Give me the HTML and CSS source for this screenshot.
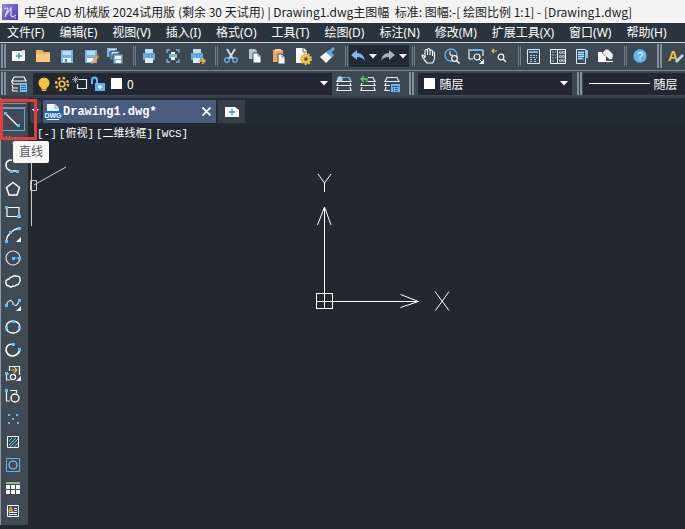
FILE: index.html
```html
<!DOCTYPE html>
<html lang="zh-CN">
<head>
<meta charset="utf-8">
<title>中望CAD 机械版 2024</title>
<link rel="stylesheet" href="styles.css">
</head>
<body>
<header class="titlebar">
  <svg class="logo" width="16" height="16" viewBox="0 0 16 16"><defs><linearGradient id="lg" x1="0" y1="0" x2="1" y2="1"><stop offset="0" stop-color="#8d86dc"/><stop offset="1" stop-color="#5433b4"/></linearGradient></defs><rect width="16" height="16" fill="url(#lg)"/><path d="M2 5q4-2 4 0-2 5-3 8M4 11l5-7v8l2 1 3-2" fill="none" stroke="#e5dcf8" stroke-width="1.2"/><path d="M13 14h1" stroke="#fff"/></svg>
  <h1>中望CAD 机械版 2024试用版 (剩余 30 天试用) | Drawing1.dwg主图幅&nbsp; 标准: 图幅:-[ 绘图比例 1:1] - [Drawing1.dwg]</h1>
</header>
<nav class="menu">
  <a href="#">文件(F)</a><a href="#">编辑(E)</a><a href="#">视图(V)</a><a href="#">插入(I)</a><a href="#">格式(O)</a><a href="#">工具(T)</a><a href="#">绘图(D)</a><a href="#">标注(N)</a><a href="#">修改(M)</a><a href="#">扩展工具(X)</a><a href="#">窗口(W)</a><a href="#">帮助(H)</a>
</nav>
<div class="toolbar standard">
  <span class="grip"></span>
  <button aria-label="新建"><svg viewBox="0 0 18 18"><path d="M2 4h10l3 3v7H2z" fill="#fff"/><path d="M12 3h3v4h-3z" fill="#dbe5ec"/><path d="M9 6v6M6 9h6" stroke="#3b91c5" stroke-width="1.4"/></svg></button>
  <button aria-label="打开"><svg viewBox="0 0 18 18"><path d="M2 3h6l2 2h6v10H2z" fill="#e9b56e"/><path d="M2 7h14v8H2z" fill="#ffc77d"/></svg></button>
  <button aria-label="保存"><svg viewBox="0 0 18 18"><path d="M3 3h12v13H3z" fill="#75b4ed"/><path d="M5 4h8v4H5z" fill="#b8dcf7"/><path d="M5 11h8v4H5z" fill="#fff"/><path d="M7 12h2v3H7z" fill="#4480b4"/></svg></button>
  <button aria-label="另存为"><svg viewBox="0 0 18 18"><path d="M3 3h12v13H3z" fill="#75b4ed"/><path d="M5 4h8v4H5z" fill="#b8dcf7"/><path d="M5 11h6v4H5z" fill="#fff"/><path d="M15 8l2 2-5 6-3 1 1-3z" fill="#eea447"/><path d="M15 8l2 2" stroke="#d4572b" stroke-width="2"/></svg></button>
  <button aria-label="全部保存"><svg viewBox="0 0 18 18"><path d="M1 1h10v9H1z" fill="#75b4ed"/><path d="M3 2h6v3H3z" fill="#d1e9fb"/><path d="M4 4h10v9H4z" fill="#5798cd" stroke="#394753"/><path d="M6 5h6v3H6z" fill="#d1e9fb"/><path d="M7 7h10v10H7z" fill="#75b4ed" stroke="#394753"/><path d="M9 9h6v3H9zM10 13h5v3h-5z" fill="#fff"/></svg></button>
  <span class="sep"></span>
  <button aria-label="打印"><svg viewBox="0 0 18 18"><path d="M5 2h8v4H5z" fill="#c5e1f5"/><path d="M3 6h12v7H3z" fill="#67a9e1"/><path d="M5 11h8v5H5z" fill="#dceefa"/></svg></button>
  <button aria-label="打印预览"><svg viewBox="0 0 18 18"><path d="M3 6V3h3M12 3h3v3M15 12v3h-3M6 15H3v-3" fill="none" stroke="#73b5e7" stroke-width="1.3"/><path d="M7 5h4v2H7z" fill="#fff"/><path d="M5 7h8v4H5z" fill="#7bbbeb"/><path d="M7 10h4v3H7z" fill="#e8f4fd"/></svg></button>
  <button aria-label="发布"><svg viewBox="0 0 18 18"><path d="M5 2h8v4H5z" fill="#c5e1f5"/><path d="M3 6h12v7H3z" fill="#67a9e1"/><path d="M5 11h7v5H5z" fill="#dceefa"/><path d="M10 14h6M14 11l3 3-3 3" fill="none" stroke="#f1bd47" stroke-width="1.4"/></svg></button>
  <span class="sep"></span>
  <button aria-label="剪切"><svg viewBox="0 0 18 18"><path d="M5 2l6 10M13 2L7 12" stroke="#ccd9e3" stroke-width="2"/><circle cx="5" cy="13" r="2.2" fill="none" stroke="#6aaddf" stroke-width="1.4"/><circle cx="13" cy="13" r="2.2" fill="none" stroke="#6aaddf" stroke-width="1.4"/></svg></button>
  <button aria-label="复制"><svg viewBox="0 0 18 18"><path d="M3 2h6l2 2v8H3z" fill="#b3c6d3"/><path d="M7 6h5l3 3v7H7z" fill="#fff" stroke="#3e4a55"/><path d="M12 6v3h3" fill="none" stroke="#6a7b88"/></svg></button>
  <button aria-label="粘贴"><svg viewBox="0 0 18 18"><path d="M3 3h10v12H3z" fill="#eda864"/><path d="M5 2h6v2H5z" fill="#f4d2a5"/><path d="M8 7h4l3 3v7H8z" fill="#fff" stroke="#3e4a55"/><path d="M12 7v3h3" fill="none" stroke="#6a7b88"/></svg></button>
  <button aria-label="页面设置"><svg viewBox="0 0 18 18"><path d="M2 1h8l3 3v12H2z" fill="#fff"/><path d="M9 1v4h4" fill="none" stroke="#56636e"/><circle cx="12" cy="12" r="5" fill="#c99a2c" stroke="#e9bd50" stroke-width="2" stroke-dasharray="2 1.5"/><circle cx="12" cy="12" r="3.2" fill="none" stroke="#f2c34e" stroke-width="2"/><circle cx="12" cy="12" r="1.5" fill="#4a4c45"/></svg></button>
  <button aria-label="特性匹配"><svg viewBox="0 0 18 18"><path d="M8 5l6 5-6 6-6-6z" fill="#fff"/><path d="M8 5l3-2 5 5-2 3z" fill="#5fa9e2"/><path d="M12 5l4-4" stroke="#5fa9e2" stroke-width="3"/></svg></button>
  <span class="sep"></span>
  <div class="history">
    <button aria-label="放弃"><svg viewBox="0 0 18 18"><path d="M2 8l6-5v3c5 0 7 3 8 8-2-3-4-4-8-4v3z" fill="#7eb9ee"/></svg></button>
    <button class="drop" aria-label="放弃列表"><svg viewBox="0 0 8 5"><path d="M0 0h8L4 4.500z" fill="#fff"/></svg></button>
    <button aria-label="重做"><svg viewBox="0 0 18 18"><path d="M16 8l-6-5v3c-5 0-7 3-8 8 2-3 4-4 8-4v3z" fill="#aab1b7"/></svg></button>
    <button class="drop" aria-label="重做列表"><svg viewBox="0 0 8 5"><path d="M0 0h8L4 4.500z" fill="#fff"/></svg></button>
  </div>
  <span class="sep tight"></span>
  <button aria-label="平移"><svg viewBox="0 0 18 18"><path d="M6 11V4q0-1.500 1.300-1.500T8.500 4V3q0-1.500 1.200-1.500T11 3v1q.2-1 1.200-1t1.300 1v2q.2-1 1-1t1 1v5c0 3-1 4-2 5H8c-2-2-4-5-5-7 0-2 2-1 3 2M8.500 4v4M11 4v4M13.500 6v3" fill="none" stroke="#fff" stroke-width="1.100"/></svg></button>
  <button aria-label="实时缩放"><svg viewBox="0 0 18 18"><circle cx="8" cy="8" r="6" fill="none" stroke="#63abe0" stroke-width="1.500"/><path d="M7 4v4h3" fill="none" stroke="#fff"/><circle cx="11.500" cy="11.500" r="2.800" fill="#3d4953" stroke="#fff" stroke-width="1.200"/><path d="M13.500 13.500l3 3" stroke="#fff" stroke-width="1.500"/></svg></button>
  <button aria-label="窗口缩放"><svg viewBox="0 0 18 18"><path d="M2 12V3h14v6M2 12h4" fill="none" stroke="#fff" stroke-width="1.100"/><path d="M1 2h15v2H1z" fill="#6bb4e8"/><circle cx="10" cy="10" r="3" fill="#3d4953" stroke="#fff" stroke-width="1.200"/><path d="M12 12l3 3" stroke="#fff"/><path d="M17 12v5h-5z" fill="#fff"/></svg></button>
  <button aria-label="缩放上一个"><svg viewBox="0 0 18 18"><path d="M1 4h5M3 2L1 4l2 2" fill="none" stroke="#e9bd45" stroke-width="1.200"/><circle cx="10" cy="10" r="2.800" fill="none" stroke="#fff" stroke-width="1.200"/><path d="M12 12l3 3" stroke="#fff" stroke-width="1.200"/></svg></button>
  <span class="sep"></span>
  <button aria-label="特性"><svg viewBox="0 0 18 18"><path d="M2.500 2.500h12v14h-12z" fill="none" stroke="#dce9f3"/><path d="M4 4h9v2H4z" fill="#6db5e9"/><path d="M5 8.500h7M5 10.500h7M5 12.500h3M5 14.500h3M9 12.500h3M9 14.500h3" stroke="#9ccff1" stroke-dasharray="2 1"/></svg></button>
  <button aria-label="设计中心"><svg viewBox="0 0 18 18"><path d="M1.500 2.500h15v14h-15zM8.500 2v14" fill="none" stroke="#fff"/><path d="M3 5h2M3 8h2M3 11h2M3 14h2M6 5h1M6 8h1M6 11h1" stroke="#83c2ef"/><path d="M10.500 4.500h2v2h-2zM13.500 4.500h2v2h-2zM10.500 8.500h2v2h-2zM13.500 8.500h2v2h-2zM10.500 12.500h2v2h-2zM13.500 12.500h2v2h-2z" fill="#61717c" stroke="#d9eaf6" stroke-width=".6"/></svg></button>
  <button aria-label="工具选项板"><svg viewBox="0 0 18 18"><path d="M3.500 2.500h9v14h-9z" fill="none" stroke="#dbe6ee"/><path d="M5 4h6v9H5z" fill="#4a91cc"/><path d="M5 5.500h6M5 7.500h6M5 9.500h6M5 11.500h4" stroke="#b9ddf5"/><path d="M12 3h3v8h-3z" fill="#8fc8ee"/></svg></button>
  <button aria-label="删除"><svg viewBox="0 0 18 18"><path d="M1 5h8v10H1z" fill="#fff"/><path d="M5 6l3-3q2-2 4 0l4 4v4l-3 2z" fill="#eef3f6" stroke="#4a5661" stroke-width=".7"/><path d="M1 14.500h15" stroke="#fff" stroke-width="1.200"/></svg></button>
  <span class="sep"></span>
  <button aria-label="帮助"><svg class="badge" viewBox="0 0 18 18"><circle cx="9" cy="9" r="6.700" fill="#62b6f5"/><text x="9" y="13" text-anchor="middle" font-size="11" fill="#fff">?</text></svg></button>
  <span class="grip wide"></span>
  <button aria-label="文字样式"><svg class="badge" viewBox="0 0 18 18"><text x="1" y="14" font-size="14" font-weight="700" fill="#f1c23f">A</text><path d="M9 15l7-7" stroke="#c9d6df" stroke-width="2.500"/></svg></button>
</div>
<div class="toolbar properties">
  <span class="grip"></span>
  <button class="layers" aria-label="图层特性管理器"><svg viewBox="0 0 18 18"><path d="M4 2h10l2 4H2zM2 6v1l1 2h7M2 10l1 3h5M2 14l1 2h5" fill="none" stroke="#fff" stroke-width="1.200"/><path d="M10 8h7v9h-7z" fill="#7abdf0"/><path d="M11 10.500h5M11 12.500h5M11 14.500h5" stroke="#2c6ba3"/></svg></button>
  <div class="combo layer">
    <svg viewBox="0 0 18 18"><circle cx="9" cy="8" r="5.500" fill="#f8c33c"/><path d="M6 12h6l-1 4H7z" fill="#f8c33c"/><path d="M7 14.500h4" stroke="#a8812d"/></svg>
    <svg viewBox="0 0 18 18"><circle cx="9" cy="9" r="2.800" fill="none" stroke="#f8c33c" stroke-width="1.600"/><circle cx="9" cy="9" r="6" fill="none" stroke="#f8c33c" stroke-width="2.400" stroke-dasharray="2.400 2.310"/></svg>
    <svg viewBox="0 0 18 18"><path d="M8 4.500h7.500v9h-9V9" fill="none" stroke="#e4eaf0" stroke-width="1.200"/><path d="M4.500 1v7M1 4.500h7M2 2l5 5M7 2L2 7" stroke="#aab4bd" stroke-width=".8"/></svg>
    <svg viewBox="0 0 18 18"><path d="M3 9V5q0-2.500 2.500-2.500T8 5v3" fill="none" stroke="#69b7ed" stroke-width="2"/><path d="M6 8h10v8H6z" fill="#5eb4f4"/><path d="M11 10v4M9 12h4" stroke="#fff" stroke-width="1.500"/></svg>
    <span class="swatch"></span>
    <select aria-label="图层"><option>0</option></select>
    <svg class="arrow" viewBox="0 0 8 5"><path d="M0 0h8L4 4.500z" fill="#fff"/></svg>
  </div>
  <button aria-label="设为当前图层"><svg viewBox="0 0 18 18"><path d="M4 2.500h10l2 4H2zM3 8l-1 2.500h14L15 8M3 12l-1 3.500h14L15 12" fill="none" stroke="#e8eef2" stroke-width="1.200"/><path d="M4 2.500h10l2 4" fill="none" stroke="#6aa9d6" stroke-width="1.200"/><circle cx="5" cy="4" r="2.700" fill="#a6d2ee"/></svg></button>
  <button aria-label="上一个图层"><svg viewBox="0 0 18 18"><path d="M9 2.500h5l2 4H9M3 8l-1 2.500h14L15 8M3 12l-1 3.500h14L15 12" fill="none" stroke="#e8eef2" stroke-width="1.200"/><path d="M8 7V4H2M5 1L2 4l3 3" fill="none" stroke="#67c96e" stroke-width="1.300"/></svg></button>
  <button aria-label="图层状态"><svg viewBox="0 0 18 18"><path d="M4 2.500h10l2 4H2zM3 8l-1 2.500h5M3 12l-1 3.500h5" fill="none" stroke="#e8eef2" stroke-width="1.200"/><path d="M8 9h9v8H8z" fill="#67b6f0"/><path d="M9 11.500h7M10 13.500h1M12 13.500h3M10 15.500h1M12 15.500h3" stroke="#245f91"/></svg></button>
  <span class="grip mid"></span>
  <div class="combo color"><span class="swatch"></span><select aria-label="颜色"><option>随层</option></select><svg class="arrow" viewBox="0 0 8 5"><path d="M0 0h8L4 4.500z" fill="#fff"/></svg></div>
  <span class="grip mid second"></span>
  <div class="combo linetype"><span class="rule"></span><select aria-label="线型"><option>随层</option></select></div>
</div>
<main>
  <aside class="draw">
    <button class="active" aria-label="直线" aria-describedby="tip"><svg viewBox="0 0 18 18"><path d="M2 3l12 12" stroke="#fff" stroke-width="1.200"/><path d="M0 1h3v3H0zM13 13h3v3h-3z" fill="#61bff3"/></svg></button>
    <button aria-label="构造线"><svg viewBox="0 0 18 18"><path d="M2 2l2 2 2-2M8 9h3" fill="none" stroke="#61a9d6"/></svg></button>
    <button aria-label="多段线"><svg viewBox="0 0 18 18"><path d="M14 14H8Q2 13 2 8t6-5" fill="none" stroke="#fff" stroke-width="1.500"/><path d="M12 13h3v3h-3zM6 13h3v3H6z" fill="#61bff3"/></svg></button>
    <button aria-label="正多边形"><svg viewBox="0 0 18 18"><path d="M9 2.500l6.500 5-2.500 7.500H5L2.500 7.500z" fill="none" stroke="#fff" stroke-width="1.500"/></svg></button>
    <button aria-label="矩形"><svg viewBox="0 0 18 18"><path d="M3 4.500h12v9H3z" fill="none" stroke="#fff" stroke-width="1.200"/><path d="M1 3h3v3H1zM13 12h4v3h-4z" fill="#61bff3"/></svg></button>
    <button aria-label="圆弧"><svg viewBox="0 0 18 18"><path d="M2 15Q4 5 15 2" fill="none" stroke="#fff" stroke-width="1.300"/><path d="M14 1h3v3h-3zM5 5h3v3H5zM1 14h3v3H1z" fill="#61bff3"/><path d="M17 11v5h-5z" fill="#fff"/></svg></button>
    <button aria-label="圆"><svg viewBox="0 0 18 18"><circle cx="9" cy="9" r="7" fill="none" stroke="#d5dde3" stroke-width="1.200"/><path d="M9 9h6" stroke="#61bff3"/><path d="M8 8h3v3H8zM14 8h3v3h-3z" fill="#61bff3"/></svg></button>
    <button aria-label="修订云线"><svg viewBox="0 0 18 18"><path d="M5 14q-3 0-3-3-1-3 3-4 1-2 3-2 2-2 4-1 4 0 4 3 1 2-1 4 0 2-3 2-1 2-3 1-2 2-4 0z" fill="none" stroke="#fff" stroke-width="1.400"/></svg></button>
    <button aria-label="样条曲线"><svg viewBox="0 0 18 18"><path d="M2 10q4-8 7-2t6-2" fill="none" stroke="#d5e9f5" stroke-width="1.200"/><path d="M1 9h3v3H1zM8 8h2v2H8zM14 4h3v3h-3z" fill="#61bff3"/><path d="M17 11v5h-5z" fill="#fff"/></svg></button>
    <button aria-label="椭圆"><svg viewBox="0 0 18 18"><ellipse cx="9" cy="9" rx="7" ry="6" fill="none" stroke="#fff" stroke-width="1.600"/><path d="M8 2h3v3H8zM1 8h3v3H1zM14 8h3v3h-3z" fill="#61bff3"/></svg></button>
    <button aria-label="椭圆弧"><svg viewBox="0 0 18 18"><path d="M9 3Q2 3 2 9q1 6 7 6 6-1 7-7" fill="none" stroke="#fff" stroke-width="1.600"/><path d="M8 2h3v3H8zM14 7h3v3h-3z" fill="#61bff3"/></svg></button>
    <button aria-label="插入块"><svg viewBox="0 0 18 18"><path d="M5.500 7V2.500h10V11M5 10H2.500v6H6" fill="none" stroke="#e7eef3" stroke-width="1.200"/><path d="M7 6h5M10 3l3 3-3 3" fill="none" stroke="#e9c24b" stroke-width="1.200"/><circle cx="9" cy="13" r="2.600" fill="none" stroke="#fff" stroke-width="1.200"/><path d="M1 8h3v3H1z" fill="#61bff3"/><path d="M17 12v5h-5z" fill="#fff"/></svg></button>
    <button aria-label="创建块"><svg viewBox="0 0 18 18"><path d="M2.500 5v9H6M6 3.500h6.500V6" fill="none" stroke="#e7eef3" stroke-width="1.200"/><path d="M1 2h3v3H1z" fill="#61bff3"/><circle cx="11" cy="11" r="4" fill="none" stroke="#fff" stroke-width="1.400"/></svg></button>
    <button aria-label="点"><svg viewBox="0 0 18 18"><path d="M4 4h2v2H4zM12 4h2v2h-2zM8 8h2v2H8zM4 12h2v2H4zM13 12h2v2h-2z" fill="#61bff3"/></svg></button>
    <button aria-label="图案填充"><svg viewBox="0 0 18 18"><path d="M3.500 3.500h11v11h-11z" fill="none" stroke="#fff"/><path d="M5 8l3-3M5 12l7-7M6 14l8-8M10 14l4-4" stroke="#65b6e7"/></svg></button>
    <button aria-label="面域"><svg viewBox="0 0 18 18"><path d="M2.500 2.500h13v13h-13z" fill="none" stroke="#68b5e5"/><circle cx="9" cy="9" r="4" fill="none" stroke="#8cc4e8" stroke-width="1.200"/></svg></button>
    <button aria-label="表格"><svg viewBox="0 0 18 18"><path d="M2 3h14v2H2z" fill="#97b78f"/><path d="M2 6h4v4H2zM7 6h4v4H7zM12 6h4v4h-4zM2 11h4v4H2zM7 11h4v4H7zM12 11h4v4h-4z" fill="#f5f7f8"/></svg></button>
    <button aria-label="多行文字"><svg class="badge" viewBox="0 0 18 18"><path d="M3.500 3.500h11v11h-11z" fill="none" stroke="#fff"/><text x="4" y="10" font-size="7" font-weight="700" fill="#ebbf3d">A</text><path d="M10 6.500h3M10 8.500h3M5 10.500h8M5 12.500h8" stroke="#e7edf2"/></svg></button>
    <span class="highlight"></span>
    <span class="tooltip" id="tip" role="tooltip">直线</span>
  </aside>
  <section class="work">
    <div class="tabs">
      <button class="list" aria-label="文件列表"><svg width="7" height="5" viewBox="0 0 7 5"><path d="M0 0h7L3.500 4z" fill="#fff"/></svg></button>
      <div class="tab"><svg class="doc badge" viewBox="0 0 18 18"><path d="M3 1h8l4 4v12H3z" fill="#eaf5fd"/><path d="M11 1v4h4" fill="none" stroke="#69addd"/><rect y="8" width="18" height="8" rx="1" fill="#1565c6"/><text x="9" y="15" text-anchor="middle" font-size="7" font-weight="700" fill="#fff">DWG</text></svg><a href="#">Drawing1.dwg*</a><button aria-label="关闭"><svg width="9" height="9" viewBox="0 0 9 9"><path d="M.5.5l8 8M8.500.5l-8 8" stroke="#fff" stroke-width="1.800"/></svg></button></div>
      <button class="new" aria-label="新建标签"><svg viewBox="0 0 18 18"><path d="M2 4h10l4 3v7H2z" fill="#fff"/><path d="M9 6v6M6 9h6" stroke="#3b91c5" stroke-width="1.400"/></svg></button>
    </div>
    <div class="viewport">
      <div class="view-label"><span>[-]</span><span>[俯视]</span><span>[二维线框]</span><span>[WCS]</span></div>
      <svg class="drawing" aria-label="坐标系">
        <g fill="none" stroke="#c9cdd0"><path d="M1.500 37v65M4 61L36 43"/><path d="M.5 56.500h6v10h-6z"/></g>
        <g fill="none" stroke="#fff" shape-rendering="crispEdges"><path d="M294.500 185V84M286.500 169.500h16v15h-16zM286.500 177.500H389"/></g>
        <g fill="none" stroke="#fff"><path d="M287.500 101l7-18 6.500 18M370.500 170.500l18 7-18 6"/><path d="M288 50l6.500 9 6.500-9M294.500 59v9M405 167.500l14 19M419 167.500l-13.500 19"/></g>
      </svg>
    </div>
  </section>
</main>
</body>
</html>
```
FILE: styles.css
```css
* { box-sizing: border-box; }
body {
  margin: 0;
  min-height: 100vh;
  display: flex;
  flex-direction: column;
  overflow: hidden;
  background: #212830;
  color: #fff;
  font: 12px/20px "Noto Sans", "Noto Sans CJK SC", sans-serif;
}
button { padding: 0; border: 0; background: none; color: inherit; font: inherit; }
a { color: inherit; text-decoration: none; }
svg { display: block; flex: none; }
.badge { font-family: "Liberation Sans", sans-serif; }

.titlebar {
  height: 23px;
  padding-left: 2px;
  display: flex;
  align-items: center;
  gap: 6px;
  background: #f3f3f4;
  color: #1b1b1b;
}
.titlebar h1 {
  margin: 0;
  font: 400 12px/20px "Noto Sans CJK SC", sans-serif;
  white-space: nowrap;
}
.menu {
  height: 20px;
  padding-left: 7px;
  display: flex;
  gap: 15px;
  align-items: center;
  background: #2a343e;
  border-bottom: 1px solid #c3ced6;
  white-space: nowrap;
}

.toolbar { display: flex; align-items: center; background: #3d4852; }
.toolbar button { width: 24px; flex: none; display: grid; place-items: center; }
.toolbar svg, .draw svg, .tab .doc, .new svg { width: 18px; height: 18px; }
.standard { height: 28px; padding-bottom: 1px; border-bottom: 1px solid #77858f; }
.properties { height: 27px; border-bottom: 2px solid #353e4b; }
.grip {
  flex: none;
  align-self: stretch;
  width: 5px;
  margin: 1px;
  border: solid #82909b;
  border-width: 0 2px;
}
.grip.wide { margin: 1px 2px 1px 5px; }
.grip.mid { margin: 1px 4px 1px 5px; }
.grip.second { margin-right: 1px; }
.sep {
  flex: none;
  width: 3px;
  height: 20px;
  margin: 0 1px 0 6px;
  border: solid #71808b;
  border-width: 0 1px;
}
.sep.tight { margin: 0 1px 0 3px; }
.history { height: 22px; display: flex; align-items: center; background: #222a35; }
.history button { width: 18px; }
.toolbar .drop { width: 12px; }
.toolbar .drop svg, .toolbar .arrow { width: 8px; height: 5px; }

.combo {
  position: relative;
  height: 22px;
  display: flex;
  align-items: center;
  background: #212834;
}
.combo select {
  appearance: none;
  flex: 1;
  min-width: 0;
  height: 20px;
  padding: 0;
  border: 0;
  background: transparent;
  color: #fff;
  font: 12px/20px "Noto Sans CJK SC", sans-serif;
}
.combo .arrow { position: absolute; right: 4px; top: 8px; }
.layer { flex: 299 1 0; padding-left: 2px; }
.toolbar .layers { margin: 0 2px 0 0; }
.swatch { flex: none; width: 11px; height: 11px; margin: 0 5px 0 4px; background: #fff; }
.color { flex: 154 1 0; }
.color .swatch { margin-left: 6px; margin-right: 4px; }
.linetype { flex: 103 1 0; }
.rule { flex: none; width: 61px; height: 1px; margin: 0 4px 0 6px; background: #fff; }

main { flex: 1; display: flex; }
.draw {
  position: relative;
  z-index: 1;
  flex: none;
  width: 30px;
  padding: 10px 0 0 1px;
  margin-bottom: 4px;
  background: linear-gradient(90deg, #8b98a4 1px, #3f4a54 1px 28px, #2a272a 28px);
}
.draw button { width: 24px; height: 23px; display: grid; place-items: center; }
.draw .active { border: 1px solid #5fa8d5; }
.draw::before {
  content: "";
  position: absolute;
  top: 5px;
  left: 2px;
  width: 24px;
  height: 3px;
  border: solid #82909b;
  border-width: 1px 0;
}
.highlight {
  position: absolute;
  top: 1px;
  left: 0;
  width: 37px;
  height: 41px;
  border: 3px solid #e43d40;
}
.tooltip {
  position: absolute;
  top: 43px;
  left: 13px;
  padding: 1px 6px;
  border-radius: 2px;
  background: #f9f9f9;
  color: #575757;
  white-space: nowrap;
}

.work { flex: 1; min-width: 0; display: flex; flex-direction: column; }
.tabs { height: 26px; padding: 2px 0 1px; display: flex; gap: 2px; background: #222a34; }
.list, .new { display: grid; place-items: center; background: #37404a; }
.list { width: 11px; }
.new { width: 27px; }
.tab {
  width: 173px;
  padding: 0 5px 0 1px;
  display: flex;
  align-items: center;
  gap: 1px;
  background: #4a5b7d;
}
.tab a { flex: 1; font: bold 12px/20px "Liberation Mono", monospace; }
.viewport { position: relative; flex: 1; }
.view-label {
  padding-left: 7px;
  display: flex;
  gap: 2px;
  font: 11px/20px "Liberation Mono", "Noto Sans CJK SC", monospace;
}
.drawing { position: absolute; inset: 0; width: 100%; height: 100%; }
```
